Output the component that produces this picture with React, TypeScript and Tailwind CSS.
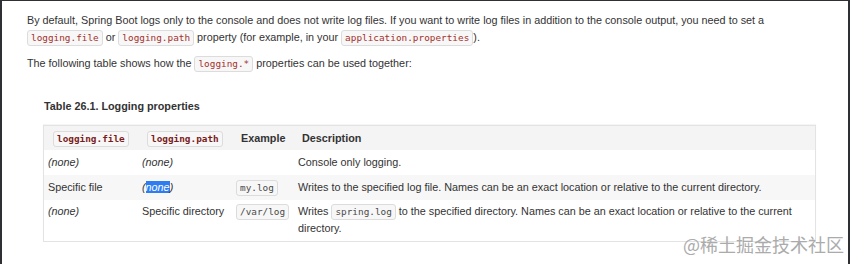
import React from "react";

const C = ({ children, v = "p" }: { children: React.ReactNode; v?: "p" | "h" | "b" }) => {
  const color = v === "p" ? "text-[#a5302c]" : v === "h" ? "text-[#7b1c1c] font-bold" : "text-[#4a4a4a]";
  return (
    <code
      className={`inline-block rounded-[3px] border border-[#dcdcdc] bg-[#f7f7f7] px-[3px] leading-[14px] text-[9.4px] ${color}`}
      style={{ fontFamily: '"DejaVu Sans Mono", "Liberation Mono", monospace' }}
    >
      {children}
    </code>
  );
};

export default function App() {
  return (
    <div
      className="relative h-[264px] w-[850px] overflow-hidden border-l-2 border-r-2 border-t border-[#2e3033] bg-white text-[10.8px] text-[#333]"
      style={{ fontFamily: '"Liberation Sans", Arial, sans-serif' }}
    >
      <div className="pl-[25px] pt-[11px]">
        <p className="leading-[17px]">
          By default, Spring Boot logs only to the console and does not write log files. If you want to write log files in addition to the console output, you need to set a
          <br />
          <C>logging.file</C> or <C>logging.path</C> property (for example, in your <C>application.properties</C>).
        </p>
        <p className="mt-[9px] leading-[17px]">
          The following table shows how the <C>logging.*</C> properties can be used together:
        </p>
        <div className="ml-[17px] mt-[26px] font-bold leading-[17px]">Table 26.1. Logging properties</div>
        <div className="ml-[16px] mt-[10px] w-[773px] border border-[#e3e3e3] shadow-[0_-1px_1px_rgba(0,0,0,0.04)]">
          <div className="grid h-[24px] grid-cols-[94px_94px_62px_1fr] items-center bg-[#f4f4f4] font-bold">
            <div className="pl-[9px]"><C v="h">logging.file</C></div>
            <div className="pl-[9px]"><C v="h">logging.path</C></div>
            <div className="pl-[9px]">Example</div>
            <div className="pl-[8px]">Description</div>
          </div>
          <div className="grid h-[25px] grid-cols-[94px_94px_62px_1fr] items-center bg-white">
            <div className="pl-[4px] italic">(none)</div>
            <div className="pl-[4px] italic">(none)</div>
            <div className="pl-[4px]"></div>
            <div className="pl-[4px]">Console only logging.</div>
          </div>
          <div className="grid h-[25px] grid-cols-[94px_94px_62px_1fr] items-center bg-[#f7f7f7]">
            <div className="pl-[4px]">Specific file</div>
            <div className="pl-[4px] italic">
              (<span className="bg-[#2f7bf0] text-white">none</span>)
            </div>
            <div className="pl-[4px]"><C v="b">my.log</C></div>
            <div className="pl-[4px]">Writes to the specified log file. Names can be an exact location or relative to the current directory.</div>
          </div>
          <div className="grid grid-cols-[94px_94px_62px_1fr] bg-white pb-[4px] pt-[3px]">
            <div className="pl-[4px] leading-[17px] italic">(none)</div>
            <div className="pl-[4px] leading-[17px]">Specific directory</div>
            <div className="pl-[4px] leading-[17px]"><C v="b">/var/log</C></div>
            <div className="pl-[4px] pr-[20px] leading-[17px]">
              Writes <C v="b">spring.log</C> to the specified directory. Names can be an exact location or relative to the current directory.
            </div>
          </div>
        </div>
      </div>
      <div className="absolute left-[170px] top-[238px] h-[2px] w-[600px] border-t-2 border-dashed border-white"></div>
      <div
        className="absolute right-[4px] top-[232px] text-[18px] leading-[23px] text-[#ababab]"
        style={{ fontFamily: '"Noto Sans CJK SC", sans-serif' }}
      >
        @稀土掘金技术社区
      </div>
    </div>
  );
}
